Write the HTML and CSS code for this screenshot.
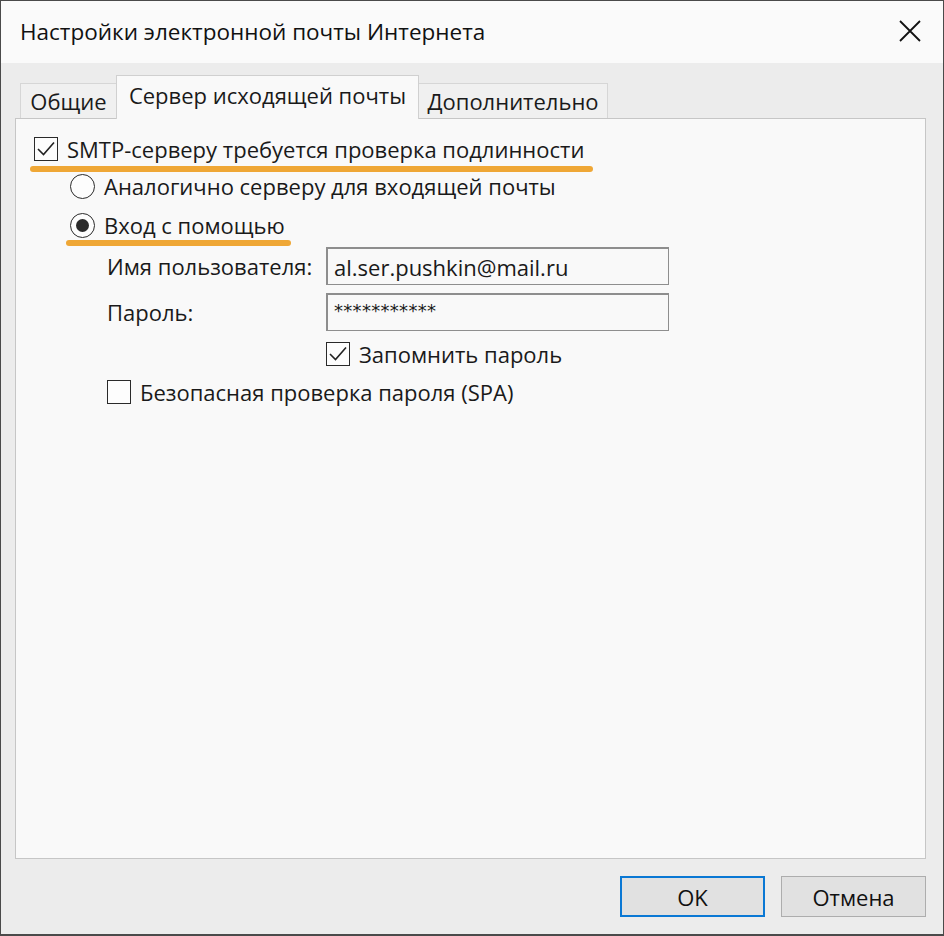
FILE: index.html
```html
<!DOCTYPE html>
<html lang="ru">
<head>
<meta charset="utf-8">
<title>Настройки электронной почты Интернета</title>
<link rel="stylesheet" href="styles.css">
</head>
<body>
<div class="window">
  <div class="titlebar">
    <div class="title">Настройки электронной почты Интернета</div>
    <div class="close">
      <svg width="24" height="24" viewBox="0 0 24 24"><path d="M2 2 L22 22 M22 2 L2 22" stroke="#111" stroke-width="1.8" fill="none"/></svg>
    </div>
  </div>
  <div class="body">
    <div class="tabs">
      <div class="tab tab-general">Общие</div>
      <div class="tab tab-active">Сервер исходящей почты</div>
      <div class="tab tab-extra">Дополнительно</div>
    </div>
    <div class="panel">
      <div class="row row-auth">
        <span class="check checked">
          <svg width="22" height="22" viewBox="0 0 22 22"><path d="M3 11 L8.5 16.5 L19 4.5" stroke="#222" stroke-width="1.6" fill="none"/></svg>
        </span>
        <span class="label">SMTP-серверу требуется проверка подлинности</span>
        <span class="mark mark-auth"></span>
      </div>
      <div class="row row-radio">
        <span class="radio"></span>
        <span class="label">Аналогично серверу для входящей почты</span>
      </div>
      <div class="row row-radio row-login">
        <span class="radio selected"><span class="dot"></span></span>
        <span class="label">Вход с помощью</span>
        <span class="mark mark-login"></span>
      </div>
      <div class="fields">
        <div class="field-label">Имя пользователя:</div>
        <div class="input">al.ser.pushkin@mail.ru</div>
        <div class="field-label">Пароль:</div>
        <div class="input input-pass">***********</div>
      </div>
      <div class="row row-remember">
        <span class="check checked">
          <svg width="22" height="22" viewBox="0 0 22 22"><path d="M3 11 L8.5 16.5 L19 4.5" stroke="#222" stroke-width="1.6" fill="none"/></svg>
        </span>
        <span class="label">Запомнить пароль</span>
      </div>
      <div class="row row-spa">
        <span class="check"></span>
        <span class="label">Безопасная проверка пароля (SPA)</span>
      </div>
    </div>
    <div class="footer">
      <button class="btn btn-ok">OK</button>
      <button class="btn btn-cancel">Отмена</button>
    </div>
  </div>
</div>
</body>
</html>
```
FILE: styles.css
```css
html, body {
  margin: 0;
  padding: 0;
  background: #ececec;
}
body {
  font-family: "Open Sans", "Noto Sans", "DejaVu Sans", sans-serif;
  font-size: 22px;
  color: #1a1a1a;
}
.window {
  width: 944px;
  height: 936px;
  box-sizing: border-box;
  border: 1px solid #4a4a4a;
  border-bottom-width: 2px;
  background: #ececec;
  display: flex;
  flex-direction: column;
}
.titlebar {
  height: 62px;
  background: #fafafa;
  display: flex;
  align-items: center;
  justify-content: space-between;
  padding: 0 18px 0 19px;
  flex: none;
}
.title {
  font-size: 22.5px;
  color: #111;
  padding-bottom: 2px;
}
.close {
  width: 30px;
  height: 30px;
  display: flex;
  align-items: center;
  justify-content: center;
  margin-bottom: 2px;
}
.body {
  flex: 1;
  display: flex;
  flex-direction: column;
  padding: 12px 17px 0 14px;
}
.tabs {
  display: flex;
  align-items: flex-end;
  padding-left: 5px;
  height: 43px;
  position: relative;
  z-index: 1;
}
.tab {
  box-sizing: border-box;
  background: #f0f0f0;
  border: 1px solid #d6d6d6;
  border-bottom: none;
  height: 35px;
  display: flex;
  align-items: center;
  justify-content: center;
  font-size: 22px;
  color: #1a1a1a;
}
.tab-general {
  width: 96px;
  border-right: none;
}
.tab-active {
  width: 303px;
  height: 44px;
  background: #f9f9f9;
  border-color: #d0d0d0;
  margin-bottom: -1px;
  padding-bottom: 6px;
}
.tab-extra {
  width: 189px;
  border-left: none;
}
.panel {
  height: 741px;
  box-sizing: border-box;
  background: #f9f9f9;
  border: 1px solid #c6c6c6;
  padding: 17px 0 0 18px;
  flex: none;
}
.row {
  display: flex;
  align-items: center;
  height: 26px;
  position: relative;
}
.label {
  line-height: 26px;
  white-space: nowrap;
}
.check {
  width: 24px;
  height: 24px;
  box-sizing: border-box;
  border: 1.5px solid #2a2a2a;
  background: #fdfdfd;
  display: flex;
  align-items: center;
  justify-content: center;
  margin-right: 9px;
  flex: none;
}
.radio {
  width: 25px;
  height: 25px;
  box-sizing: border-box;
  border: 1.5px solid #2a2a2a;
  border-radius: 50%;
  background: #fdfdfd;
  display: flex;
  align-items: center;
  justify-content: center;
  margin-right: 9px;
  flex: none;
}
.dot {
  width: 13px;
  height: 13px;
  border-radius: 50%;
  background: #2a2a2a;
}
.row-radio {
  margin-left: 36px;
  margin-top: 11px;
}
.row-login {
  margin-top: 13px;
}
.mark {
  position: absolute;
  height: 6px;
  border-radius: 3px;
  background: #efa736;
}
.mark-auth {
  left: -4px;
  width: 563px;
  top: 30px;
}
.mark-login {
  left: -4px;
  width: 225px;
  top: 28px;
}
.fields {
  display: grid;
  grid-template-columns: 219px 343px;
  row-gap: 8px;
  align-items: center;
  margin: 9px 0 0 73px;
}
.field-label {
  white-space: nowrap;
}
.input {
  height: 38px;
  box-sizing: border-box;
  border: 2px solid #8e8e8e;
  border-right-width: 1px;
  border-bottom-width: 1px;
  background: #f9f9f9;
  padding: 0 6px;
  display: flex;
  align-items: center;
  white-space: nowrap;
}
.input-pass {
  font-size: 18px;
  letter-spacing: 0.3px;
  padding-bottom: 5px;
  font-family: "DejaVu Sans", sans-serif;
}
.row-remember {
  margin: 10px 0 0 292px;
}
.row-spa {
  margin: 12px 0 0 73px;
}
.footer {
  flex: 1;
  display: flex;
  justify-content: flex-end;
  align-items: flex-start;
  padding-top: 17px;
  gap: 16px;
}
.btn {
  width: 145px;
  height: 41px;
  box-sizing: border-box;
  background: #e1e1e1;
  border: 1px solid #adadad;
  font-family: "Open Sans", "Noto Sans", sans-serif;
  font-size: 22px;
  color: #111;
  padding: 0;
}
.btn-ok {
  border: 2px solid #0a78d4;
}
```
